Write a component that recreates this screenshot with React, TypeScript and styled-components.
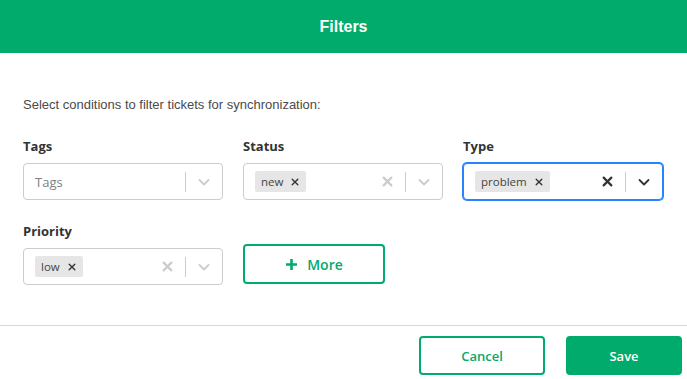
import React from 'react';
import styled, {createGlobalStyle, css} from 'styled-components';

const GREEN = '#00ab6b';

const GlobalStyle = createGlobalStyle`
  body {
    margin: 0;
    background: #ffffff;
    font-family: "Open Sans", "Liberation Sans", sans-serif;
  }
`;

const Modal = styled.div`
  width: 687px;
  height: 379px;
  display: flex;
  flex-direction: column;
  background: #ffffff;
  overflow: hidden;
`;

const Header = styled.header`
  height: 53px;
  background: ${GREEN};
  display: flex;
  align-items: center;
  justify-content: center;
  color: #ffffff;
  font-family: "Liberation Sans", Arial, sans-serif;
  font-weight: bold;
  font-size: 16px;
`;

const Body = styled.section`
  flex: 1;
  padding: 44px 23px 0 23px;
`;

const Intro = styled.p`
  margin: 0 0 25px 0;
  font-family: "Liberation Sans", Arial, sans-serif;
  font-size: 13px;
  color: #4a4a4a;
`;

const Grid = styled.div`
  display: grid;
  grid-template-columns: 200px 200px 200px;
  column-gap: 20px;
  row-gap: 22px;
`;

const Field = styled.div`
  display: flex;
  flex-direction: column;
`;

const Label = styled.label`
  font-size: 13px;
  font-weight: 700;
  color: #333333;
  line-height: 18px;
  margin-bottom: 8px;
`;

const SelectBox = styled.div<{ $focused?: boolean }>`
  height: 37px;
  box-sizing: border-box;
  border: 1px solid #cccccc;
  border-radius: 4px;
  display: flex;
  align-items: center;
  padding-left: 11px;
  background: #ffffff;
  ${({$focused}) => $focused && css`
    border-color: #2684ff;
    box-shadow: 0 0 0 1px #2684ff;
  `}
`;

const ValueArea = styled.div`
  flex: 1;
  display: flex;
  align-items: center;
`;

const Placeholder = styled.span`
  font-size: 13px;
  color: #808080;
`;

const Chip = styled.span`
  display: inline-flex;
  align-items: center;
  gap: 8px;
  height: 21px;
  padding: 0 7px 0 6px;
  background: #e6e6e6;
  border-radius: 2px;
  font-size: 11.5px;
  color: #444444;
`;

const Indicators = styled.div`
  display: flex;
  align-items: center;
  height: 100%;
`;

const Indicator = styled.span<{ $dark?: boolean }>`
  width: 36px;
  display: flex;
  align-items: center;
  justify-content: center;
  color: ${({$dark}) => ($dark ? '#333333' : '#cccccc')};
`;

const Separator = styled.span`
  width: 1px;
  height: 20px;
  background: #cccccc;
`;

const Button = styled.button<{ $primary?: boolean }>`
  box-sizing: border-box;
  display: flex;
  align-items: center;
  justify-content: center;
  gap: 9px;
  border-radius: 4px;
  border: 2px solid ${GREEN};
  background: ${({$primary}) => ($primary ? GREEN : '#ffffff')};
  color: ${({$primary}) => ($primary ? '#ffffff' : GREEN)};
  font-family: "Open Sans", "Liberation Sans", sans-serif;
  font-weight: 600;
  font-size: 13px;
  padding: 0;
  cursor: pointer;
`;

const MoreButton = styled(Button)`
  width: 142px;
  height: 40px;
  align-self: end;
  margin-bottom: 1px;
  font-size: 14px;
`;

const Footer = styled.footer`
  border-top: 1px solid #d6d6d6;
  padding: 10px 5px 4px 0;
  display: flex;
  justify-content: flex-end;
  gap: 21px;
`;

const CancelButton = styled(Button)`
  width: 126px;
  height: 39px;
`;

const SaveButton = styled(Button)`
  width: 116px;
  height: 39px;
`;

const Cross = ({size = 10, stroke = 1.8}: { size?: number; stroke?: number }) => (
    <svg width={size} height={size} viewBox="0 0 10 10">
        <path d="M1.5 1.5 L8.5 8.5 M8.5 1.5 L1.5 8.5" stroke="currentColor" strokeWidth={stroke} strokeLinecap="round"/>
    </svg>
);

const Chevron = () => (
    <svg width="14" height="14" viewBox="0 0 14 14">
        <path d="M2.5 5 L7 9.5 L11.5 5" stroke="currentColor" strokeWidth="1.8" fill="none" strokeLinecap="round" strokeLinejoin="round"/>
    </svg>
);

const Plus = () => (
    <svg width="13" height="13" viewBox="0 0 13 13">
        <path d="M6.5 1 V12 M1 6.5 H12" stroke="currentColor" strokeWidth="2.6"/>
    </svg>
);

interface ISelectProps {
    readonly label: string,
    readonly value?: string,
    readonly placeholder?: string,
    readonly focused?: boolean,
}

const MultiSelect = ({label, value, placeholder, focused}: ISelectProps) => (
    <Field>
        <Label>{label}</Label>
        <SelectBox $focused={focused}>
            <ValueArea>
                {value ? (
                    <Chip>{value}<span style={{color: '#333', display: 'flex'}}><Cross size={8} stroke={1.7}/></span></Chip>
                ) : (
                    <Placeholder>{placeholder}</Placeholder>
                )}
            </ValueArea>
            <Indicators>
                {value && <Indicator $dark={focused}><Cross size={11} stroke={2}/></Indicator>}
                <Separator/>
                <Indicator $dark={focused}><Chevron/></Indicator>
            </Indicators>
        </SelectBox>
    </Field>
);

export default function App() {
    return (
        <>
            <GlobalStyle/>
            <Modal>
                <Header>Filters</Header>
                <Body>
                    <Intro>Select conditions to filter tickets for synchronization:</Intro>
                    <Grid>
                        <MultiSelect label="Tags" placeholder="Tags"/>
                        <MultiSelect label="Status" value="new"/>
                        <MultiSelect label="Type" value="problem" focused/>
                        <MultiSelect label="Priority" value="low"/>
                        <MoreButton><Plus/>More</MoreButton>
                    </Grid>
                </Body>
                <Footer>
                    <CancelButton>Cancel</CancelButton>
                    <SaveButton $primary>Save</SaveButton>
                </Footer>
            </Modal>
        </>
    );
}
